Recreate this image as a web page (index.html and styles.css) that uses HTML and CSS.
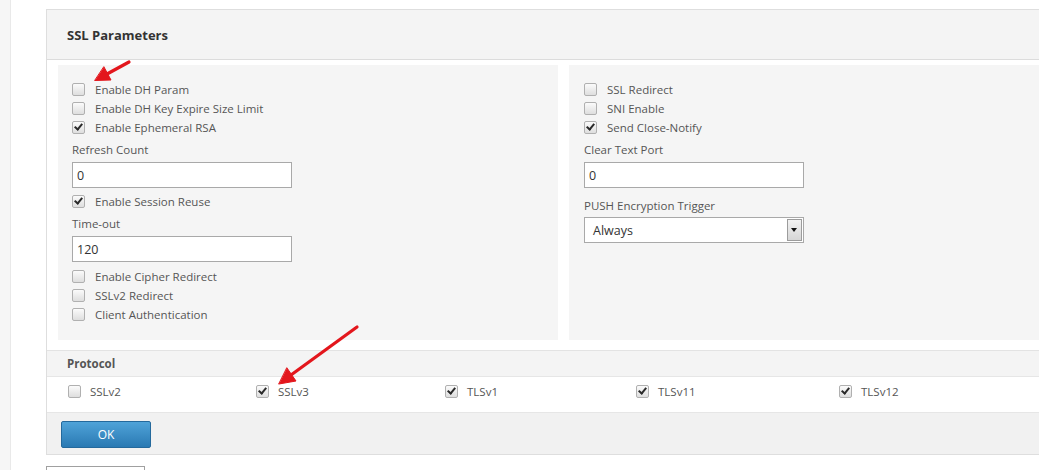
FILE: index.html
```html
<!DOCTYPE html>
<html lang="en">
<head>
    <meta charset="UTF-8">
    <title>SSL Parameters</title>
    <link rel="stylesheet" href="styles.css">
</head>
<body>
    <div class="page">
        <aside class="side-rail"></aside>
        <main class="content">
            <section class="panel">
                <header class="panel-head">SSL Parameters</header>

                <div class="param-cols">
                    <div class="param-box">
                        <div class="check-row"><span class="cb"></span>Enable DH Param</div>
                        <div class="check-row"><span class="cb"></span>Enable DH Key Expire Size Limit</div>
                        <div class="check-row"><span class="cb checked"></span>Enable Ephemeral RSA</div>
                        <div class="field-label">Refresh Count</div>
                        <div class="text-input">0</div>
                        <div class="check-row gap-top"><span class="cb checked"></span>Enable Session Reuse</div>
                        <div class="field-label tight">Time-out</div>
                        <div class="text-input close">120</div>
                        <div class="check-row gap-top-lg"><span class="cb"></span>Enable Cipher Redirect</div>
                        <div class="check-row"><span class="cb"></span>SSLv2 Redirect</div>
                        <div class="check-row"><span class="cb"></span>Client Authentication</div>
                    </div>

                    <div class="param-box right">
                        <div class="check-row"><span class="cb"></span>SSL Redirect</div>
                        <div class="check-row"><span class="cb"></span>SNI Enable</div>
                        <div class="check-row"><span class="cb checked"></span>Send Close-Notify</div>
                        <div class="field-label">Clear Text Port</div>
                        <div class="text-input">0</div>
                        <div class="field-label spaced">PUSH Encryption Trigger</div>
                        <div class="select-box">
                            <span>Always</span>
                            <span class="select-btn"></span>
                        </div>
                    </div>
                </div>

                <div class="section-head">Protocol</div>
                <div class="protocol-row">
                    <div class="check-row"><span class="cb"></span>SSLv2</div>
                    <div class="check-row"><span class="cb checked"></span>SSLv3</div>
                    <div class="check-row"><span class="cb checked"></span>TLSv1</div>
                    <div class="check-row"><span class="cb checked"></span>TLSv11</div>
                    <div class="check-row"><span class="cb checked"></span>TLSv12</div>
                </div>

                <div class="panel-foot">
                    <button class="btn-ok">OK</button>
                </div>
            </section>

            <div class="below-field"></div>
        </main>
    </div>

    <!-- red callout arrows -->
    <svg class="callouts" width="1039" height="470" viewBox="0 0 1039 470">
        <g stroke="#e3161c" stroke-width="3.2" stroke-linecap="round" fill="#e3161c">
            <line x1="129" y1="62" x2="107" y2="74"/>
            <polygon points="95,80.5 111,80 104,67" stroke-width="1"/>
            <line x1="357" y1="327" x2="291" y2="375"/>
            <polygon points="279,384 296,381 287,368" stroke-width="1"/>
        </g>
    </svg>
</body>
</html>
```

FILE: styles.css
```css
body {
    margin: 0;
    font-family: 'Open Sans', 'Noto Sans', sans-serif;
    font-size: 11.5px;
    color: #555;
    background: #fff;
    overflow: hidden;
    position: relative;
}
.page {
    display: flex;
    min-height: 470px;
}
.side-rail {
    width: 10px;
    flex: none;
    background: #f6f6f6;
    border-right: 1px solid #e9e9e9;
}
.content {
    padding: 9px 0 0 35px;
    flex: none;
}

/* main panel */
.panel {
    width: 1040px;
    border: 1px solid #dedede;
    background: #fff;
}
.panel-head {
    height: 49px;
    line-height: 50px;
    padding-left: 20px;
    background: #f4f4f4;
    border-bottom: 1px solid #dcdcdc;
    font-weight: 700;
    font-size: 13px;
    color: #333;
}
.param-cols {
    display: flex;
    gap: 11px;
    padding: 5px 0 10px 11px;
}
.param-box {
    width: 500px;
    height: 275px;
    box-sizing: border-box;
    padding: 15px 14px 0 14px;
    background: #f5f5f5;
}
.param-box.right {
    padding-left: 15px;
}

/* checkbox rows */
.check-row {
    display: flex;
    align-items: center;
    gap: 10px;
    height: 19px;
    white-space: nowrap;
}
.check-row.gap-top { margin-top: 4px; }
.check-row.gap-top-lg { margin-top: 5px; }
.cb {
    width: 11px;
    height: 11px;
    flex: none;
    border: 1px solid #b0b0b0;
    border-radius: 2px;
    background: linear-gradient(#fbfbfb, #dedede);
    position: relative;
}
.cb.checked::after {
    content: '';
    position: absolute;
    left: 3px;
    top: 0px;
    width: 3px;
    height: 6px;
    border: solid #2a2a2a;
    border-width: 0 2.5px 2.5px 0;
    transform: rotate(40deg);
}

/* text fields */
.field-label {
    margin-top: 3px;
    line-height: 19px;
}
.field-label.tight { margin-top: 3px; }
.field-label.spaced { margin-top: 8px; }
.text-input {
    margin-top: 3px;
    width: 220px;
    height: 26px;
    box-sizing: border-box;
    border: 1px solid #a9a9a9;
    background: #fff;
    padding: 0 4px;
    line-height: 25px;
    font-size: 12.5px;
    color: #333;
}
.select-box {
    margin-top: 2px;
    width: 220px;
    height: 26px;
    box-sizing: border-box;
    border: 1px solid #a9a9a9;
    background: #fff;
    display: flex;
    align-items: center;
    justify-content: space-between;
    padding: 0 1px 0 8px;
    font-size: 12.5px;
    color: #333;
}
.select-btn {
    width: 15px;
    height: 22px;
    box-sizing: border-box;
    border: 1px solid #9c9c9c;
    background: linear-gradient(#f2f2f2, #d6d6d6);
    position: relative;
}
.select-btn::after {
    content: '';
    position: absolute;
    left: 3px;
    top: 8px;
    border-left: 3.5px solid transparent;
    border-right: 3.5px solid transparent;
    border-top: 4px solid #111;
}

/* protocol section */
.section-head {
    height: 25px;
    line-height: 25px;
    padding-left: 20px;
    background: #f4f4f4;
    border-top: 1px solid #e3e3e3;
    border-bottom: 1px solid #e6e6e6;
    font-weight: 700;
    color: #555;
}
.protocol-row {
    display: grid;
    grid-template-columns: 188px 189px 191px 203px 1fr;
    align-items: start;
    height: 36px;
    box-sizing: border-box;
    padding: 5px 0 0 21px;
    border-bottom: 1px solid #e6e6e6;
}
.protocol-row .check-row { gap: 9px; }

.panel-foot {
    height: 41px;
    box-sizing: border-box;
    padding: 8px 0 0 14px;
    background: #f1f1f1;
}
.btn-ok {
    width: 90px;
    height: 27px;
    border: 1px solid #24699c;
    border-radius: 2px;
    background: linear-gradient(#4fa3d8, #2a79b3);
    color: #fff;
    font-family: inherit;
    font-size: 12px;
    padding: 0;
}

.below-field {
    margin-top: 11px;
    width: 97px;
    height: 20px;
    border: 1px solid #a0a0a0;
}

.callouts {
    position: absolute;
    left: 0;
    top: 0;
    pointer-events: none;
}
```
